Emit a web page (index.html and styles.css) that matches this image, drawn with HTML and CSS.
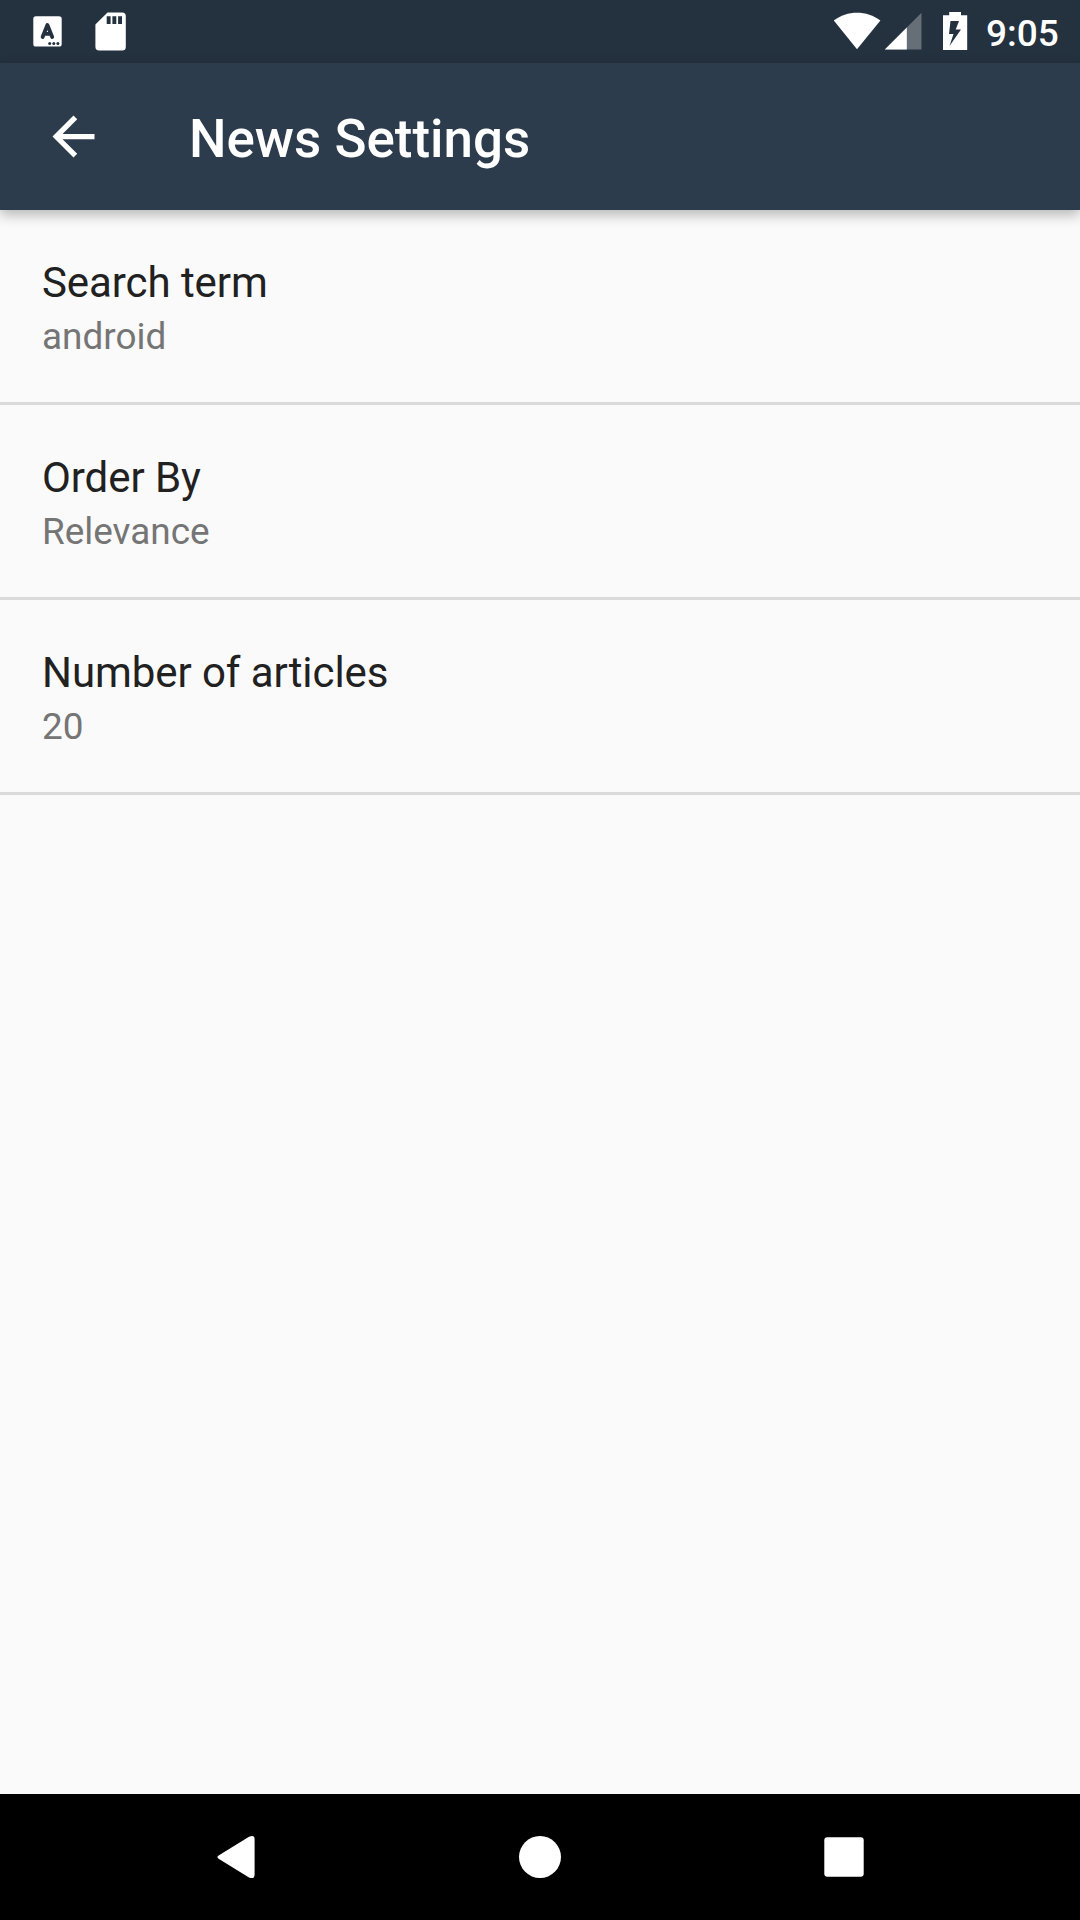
FILE: index.html
```html
<!DOCTYPE html>
<html lang="en">
<head>
<meta charset="utf-8">
<title>News Settings</title>
<link rel="stylesheet" href="styles.css">
</head>
<body>
<div class="screen">
  <div class="status-bar">
    <svg class="status-icons" width="140" height="63" viewBox="0 0 140 63" fill="#fff">
      <rect x="33.3" y="16.2" width="28.4" height="30.4" rx="2.6"/>
      <path d="M42.6 37L47.4 25L52.2 37M44.4 33.8H50.4" fill="none" stroke="#24313e" stroke-width="3.8" stroke-linecap="round" stroke-linejoin="round"/>
      <g fill="#24313e"><circle cx="49.7" cy="43.4" r="1.5"/><circle cx="53.8" cy="43.4" r="1.5"/><circle cx="57.9" cy="43.4" r="1.5"/></g>
      <path fill-rule="evenodd" d="M107.5 12.6H122.2Q125.8 12.6 125.8 16.2V47Q125.8 50.6 122.2 50.6H99.2Q95.4 50.6 95.4 46.8V24.5ZM106.7 16.3V24H110.6V16.3ZM112.4 16.3V24H116.3V16.3ZM118.1 16.3V24H122V16.3Z"/>
    </svg>
    <div class="status-right">
      <svg width="136" height="63" viewBox="832 0 136 63" fill="#fff">
        <path d="M833.8 20.5C847 10 867 10 880.4 20.5L857 49.3Z"/>
        <path d="M921.5 12.8V49.6H884.8Z" fill-opacity=".3"/>
        <path d="M906.8 27.5V49.6H884.8Z"/>
        <path fill-rule="evenodd" d="M949.2 12H961V15.2H967.2V50H943V15.2H949.2ZM950.5 21L949 34H953.5L949.5 46L961 29.5H955.7L959 21Z"/>
      </svg>
      <span class="clock">9:05</span>
    </div>
  </div>
  <header class="app-bar">
    <svg class="back" width="63" height="63" viewBox="0 0 24 24" fill="#fff"><path d="M20 11H7.83l5.59-5.59L12 4l-8 8 8 8 1.41-1.41L7.83 13H20z"/></svg>
    <h1 class="title">News Settings</h1>
  </header>
  <main class="settings">
    <div class="setting"><div class="name">Search term</div><div class="value">android</div></div>
    <div class="setting"><div class="name">Order By</div><div class="value">Relevance</div></div>
    <div class="setting"><div class="name">Number of articles</div><div class="value">20</div></div>
  </main>
  <nav class="nav-bar">
    <svg width="44" height="44" viewBox="0 0 44 44" fill="#fff"><path d="M5 20.2L35 1.7Q40.6-.7 40.6 4V39.5Q40.6 44.6 35 42.5L5 23.9Q1.8 22 5 20.2Z"/></svg>
    <svg width="44" height="44" viewBox="0 0 44 44" fill="#fff"><circle cx="22" cy="22" r="21"/></svg>
    <svg width="44" height="44" viewBox="0 0 44 44" fill="#fff"><rect x="2.3" y="2.3" width="39.4" height="39.4" rx="3"/></svg>
  </nav>
</div>
</body>
</html>
```
FILE: styles.css
```css
* { box-sizing: border-box; }
body { margin: 0; font-family: Roboto, sans-serif; }
svg { display: block; flex: none; }
.screen {
  display: flex;
  flex-direction: column;
  width: 1080px;
  height: 1920px;
  background: #fafafa;
}
.status-bar {
  display: flex;
  justify-content: space-between;
  height: 63px;
  background: #24313e;
  color: #fff;
}
.status-right {
  display: flex;
  align-items: center;
  gap: 18px;
  width: 248px;
}
.clock {
  padding-top: 4px;
  font-size: 37px;
  font-weight: 500;
  line-height: 44px;
}
.app-bar {
  display: flex;
  align-items: center;
  gap: 84px;
  height: 147px;
  padding-left: 42px;
  background: #2c3c4c;
  box-shadow: 0 5px 12px rgba(0, 0, 0, .27);
  color: #fff;
}
.title {
  margin: 0;
  padding-top: 5px;
  font-size: 52.9px;
  font-weight: 500;
  line-height: 62px;
}
.settings { flex: 1; }
.setting {
  height: 195px;
  padding: 48px 42px 0;
  border-bottom: 3px solid #dadada;
}
.name {
  color: #212121;
  font-size: 42px;
  letter-spacing: -.07px;
  line-height: 50px;
}
.value {
  margin-top: 7px;
  color: #757575;
  font-size: 36.9px;
  line-height: 44px;
}
.nav-bar {
  display: flex;
  align-items: center;
  justify-content: center;
  gap: 260px;
  height: 126px;
  background: #000;
}
```
